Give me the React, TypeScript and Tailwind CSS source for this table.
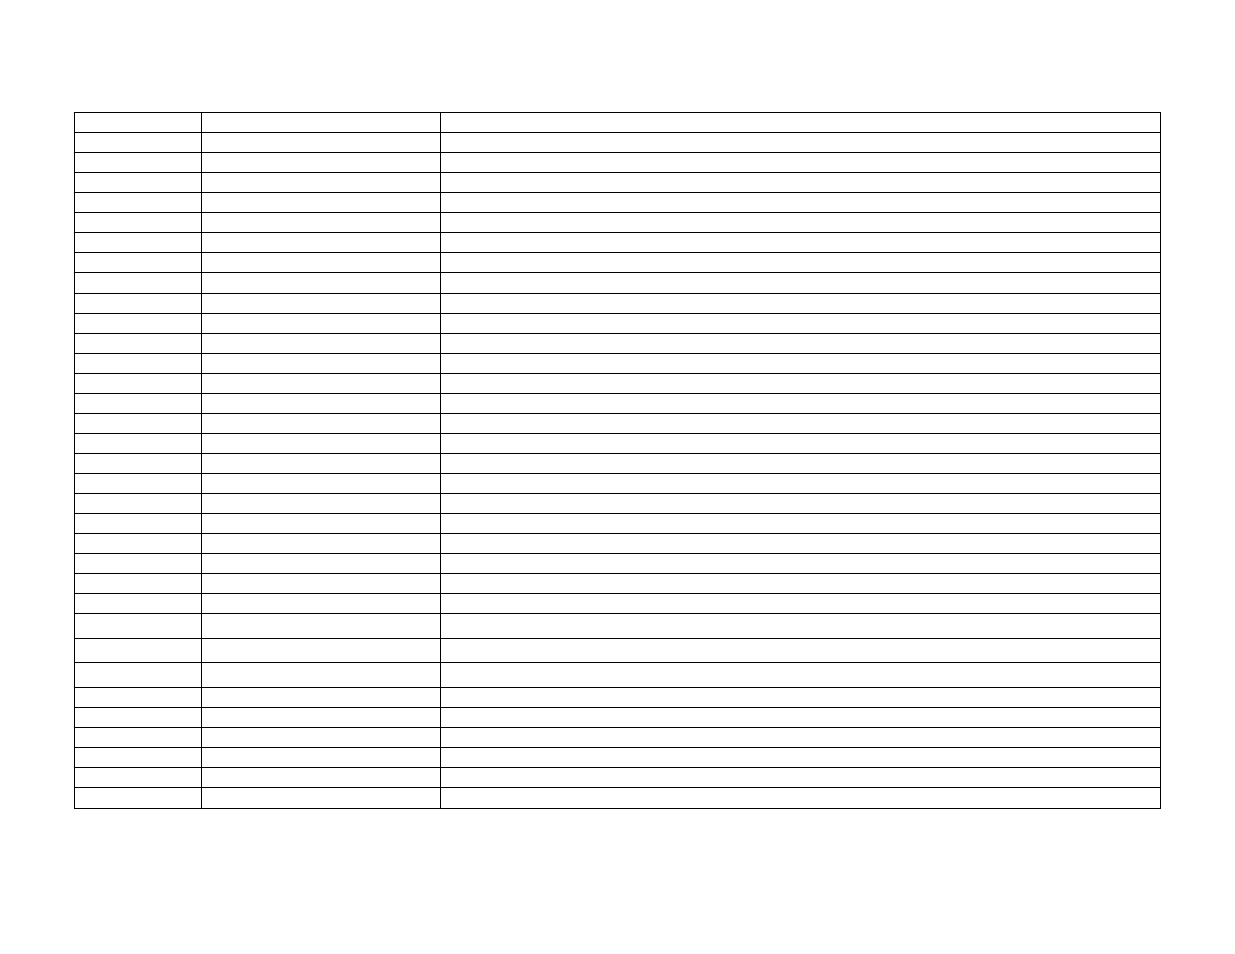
const rowHeights: string[] = [
  "h-5", "h-5", "h-5", "h-5", "h-5", "h-5", "h-5", "h-5",
  "h-[21px]",
  "h-5", "h-5", "h-5", "h-5", "h-5", "h-5", "h-5", "h-5",
  "h-5", "h-5", "h-5", "h-5", "h-5", "h-5", "h-5", "h-5",
  "h-[25px]", "h-[24px]", "h-[25px]",
  "h-5", "h-5", "h-5", "h-5", "h-5",
  "h-[21px]",
];

const columns = ["w-[127px]", "w-[239px]", "w-[720px]"];

const Row = ({ height }: { height: string }) => (
  <div className="flex">
    {columns.map((w) => (
      <div key={w} className={`${w} ${height} border-r border-b border-black`} />
    ))}
  </div>
);

const App = () => {
  return (
    <div className="min-h-[954px] w-full bg-white font-['Liberation_Sans',Arial,sans-serif]">
      <div className="pt-[112px] pl-[74px]">
        <div className="w-[1087px] border-l border-t border-black">
          {rowHeights.map((h, i) => (
            <Row key={i} height={h} />
          ))}
        </div>
      </div>
    </div>
  );
};

export default App;
